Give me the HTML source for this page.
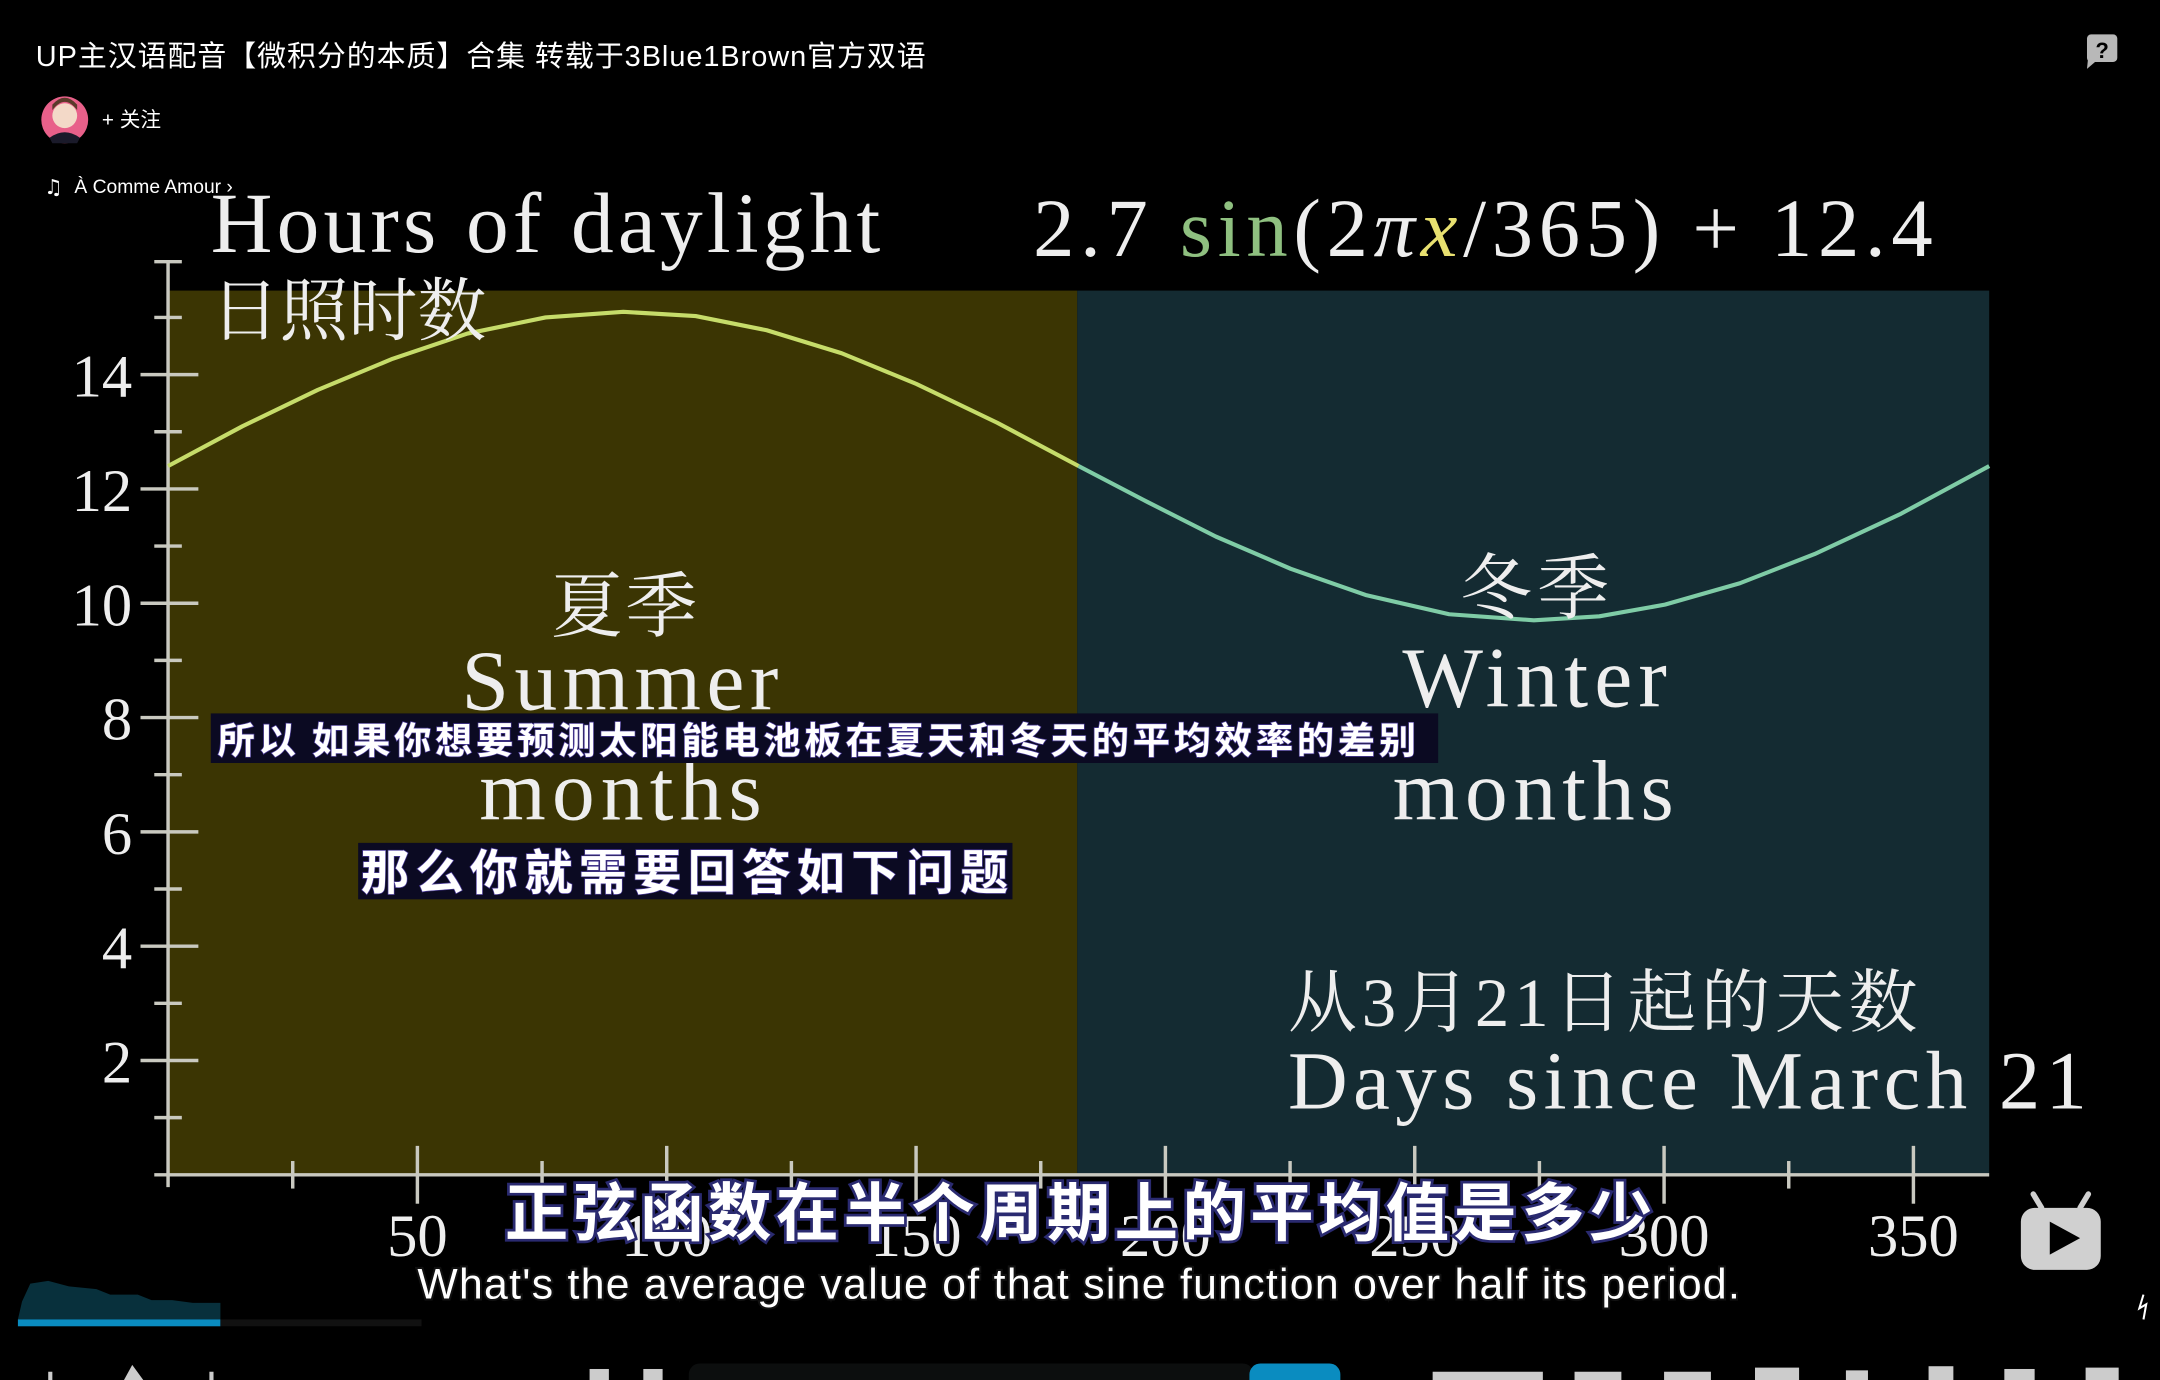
<!DOCTYPE html>
<html><head><meta charset="utf-8"><style>
html,body{margin:0;padding:0;background:#000;width:2160px;height:1380px;overflow:hidden}
svg{display:block}
</style></head><body>
<svg width="2160" height="1380" viewBox="0 0 1568 1002" preserveAspectRatio="none" xmlns="http://www.w3.org/2000/svg">
<rect width="1568" height="1002" fill="#000"/>
<!-- header -->
<text x="26" y="48" font-family="Liberation Sans, Noto Sans CJK SC, sans-serif" font-size="21" fill="#fff" textLength="646">UP主汉语配音【微积分的本质】合集 转载于3Blue1Brown官方双语</text>
<circle cx="47" cy="87" r="17" fill="#e8608a"/>
<circle cx="47" cy="84" r="9" fill="#f3d9c8"/>
<path d="M38 80 Q47 68 56 80 L56 76 Q47 66 38 76Z" fill="#5a3a2a"/>
<path d="M36 100 Q47 92 58 100 L56 104 L38 104Z" fill="#1a1a2a"/>
<text x="74" y="92" font-family="Liberation Sans, Noto Sans CJK SC, sans-serif" font-size="15" fill="#fff">+ 关注</text>
<text x="32" y="141" font-family="DejaVu Sans, sans-serif" font-size="15" fill="#fff">♫</text>
<text x="54" y="140" font-family="Liberation Sans, sans-serif" font-size="14" fill="#fff">À Comme Amour ›</text>
<rect x="1515" y="25" width="22" height="20" rx="3" fill="#b8b8b8"/>
<path d="M1516 40 L1515 50 L1522 44Z" fill="#b8b8b8"/>
<text x="1526" y="42" text-anchor="middle" font-family="Liberation Sans, sans-serif" font-weight="bold" font-size="16" fill="#000">?</text>

<!-- regions -->
<rect x="122" y="211" width="660" height="642" fill="#3b3503"/>
<rect x="782" y="211" width="662" height="642" fill="#142b32"/>

<!-- axes -->
<g stroke="#c9c9c0" stroke-width="2.5">
<line x1="122" y1="190" x2="122" y2="862"/>
<line x1="112" y1="853" x2="1444" y2="853"/>
<line x1="112" y1="190" x2="132" y2="190"/>
</g>
<g stroke="#c9c9c0" stroke-width="2.5">
<line x1="112" y1="811.5" x2="132" y2="811.5"/><line x1="102" y1="770" x2="144" y2="770"/>
<line x1="112" y1="728.5" x2="132" y2="728.5"/><line x1="102" y1="687" x2="144" y2="687"/>
<line x1="112" y1="645.5" x2="132" y2="645.5"/><line x1="102" y1="604" x2="144" y2="604"/>
<line x1="112" y1="562.5" x2="132" y2="562.5"/><line x1="102" y1="521" x2="144" y2="521"/>
<line x1="112" y1="479.5" x2="132" y2="479.5"/><line x1="102" y1="438" x2="144" y2="438"/>
<line x1="112" y1="396.5" x2="132" y2="396.5"/><line x1="102" y1="355" x2="144" y2="355"/>
<line x1="112" y1="313.5" x2="132" y2="313.5"/><line x1="102" y1="272" x2="144" y2="272"/>
<line x1="112" y1="230.5" x2="132" y2="230.5"/>
<line x1="212.5" y1="843" x2="212.5" y2="863"/><line x1="303" y1="832" x2="303" y2="874"/>
<line x1="393.5" y1="843" x2="393.5" y2="863"/><line x1="484" y1="832" x2="484" y2="874"/>
<line x1="574.5" y1="843" x2="574.5" y2="863"/><line x1="665" y1="832" x2="665" y2="874"/>
<line x1="755.5" y1="843" x2="755.5" y2="863"/><line x1="846" y1="832" x2="846" y2="874"/>
<line x1="936.5" y1="843" x2="936.5" y2="863"/><line x1="1027" y1="832" x2="1027" y2="874"/>
<line x1="1117.5" y1="843" x2="1117.5" y2="863"/><line x1="1208" y1="832" x2="1208" y2="874"/>
<line x1="1298.5" y1="843" x2="1298.5" y2="863"/><line x1="1389" y1="832" x2="1389" y2="874"/>
</g>
<g font-family="Liberation Serif, serif" font-size="44" fill="#eee" text-anchor="end">
<text x="96" y="288">14</text><text x="96" y="371">12</text><text x="96" y="454">10</text>
<text x="96" y="537">8</text><text x="96" y="620">6</text><text x="96" y="703">4</text><text x="96" y="786">2</text>
</g>
<g font-family="Liberation Serif, serif" font-size="44" fill="#eee" text-anchor="middle">
<text x="303" y="912">50</text><text x="484" y="912">100</text><text x="665" y="912">150</text>
<text x="846" y="912">200</text><text x="1027" y="912">250</text><text x="1208" y="912">300</text><text x="1389" y="912">350</text>
</g>

<!-- curve -->
<polyline fill="none" stroke="#c6dc6a" stroke-width="3" stroke-linejoin="round" points="122,338.4 176,309.5 230.7,283.1 285,260.5 339.3,242.2 396,230.5 452.5,226.4 505,229.5 556.6,239.8 611,256.5 665.3,278.8 724,307 783,338.4"/>
<polyline fill="none" stroke="#7fcca6" stroke-width="3" stroke-linejoin="round" points="783,338.4 833,364.5 882.6,389.6 937,413 991.3,432 1052,446 1113.5,450.4 1161,447.5 1208.6,439 1263,423.5 1317.2,402.3 1380,373 1444,338.4"/>

<!-- titles -->
<text x="153" y="183" font-family="Liberation Serif, serif" font-size="62" fill="#eee" textLength="486">Hours of daylight</text>
<text x="153" y="243" font-family="Liberation Serif, Noto Serif CJK SC, serif" font-size="50" fill="#eee">日照时数</text>
<text x="750" y="186" font-family="Liberation Serif, serif" font-size="60" fill="#eee" textLength="653">2.7 <tspan fill="#8fc080">sin</tspan>(2<tspan font-style="italic">π</tspan><tspan font-style="italic" fill="#e8e070">x</tspan>/365) + 12.4</text>

<g font-family="Liberation Serif, Noto Serif CJK SC, serif" fill="#eee">
<text x="400" y="458" font-size="52" textLength="106">夏季</text>
<text x="335" y="515" font-size="62" textLength="230">Summer</text>
<text x="348" y="595" font-size="62" textLength="205">months</text>
<text x="1060" y="445" font-size="52" textLength="108">冬季</text>
<text x="1018" y="513" font-size="62" textLength="192">Winter</text>
<text x="1011" y="595" font-size="62" textLength="204">months</text>
</g>
<text x="935" y="745" font-family="Liberation Serif, Noto Serif CJK SC, serif" font-size="50" fill="#eee" textLength="457">从3月21日起的天数</text>
<text x="935" y="805" font-family="Liberation Serif, serif" font-size="60" fill="#eee" textLength="580">Days since March 21</text>

<!-- subtitle boxes -->
<rect x="153" y="518" width="891" height="36" fill="#0b0a22"/>
<text x="158" y="547" font-family="Noto Sans CJK SC, sans-serif" font-weight="bold" font-size="27" fill="#fff" stroke="#4a3a9a" stroke-width="1" paint-order="stroke" textLength="870">所以  如果你想要预测太阳能电池板在夏天和冬天的平均效率的差别</text>
<rect x="260" y="612" width="475" height="41" fill="#0b0a22"/>
<text x="262" y="646" font-family="Noto Sans CJK SC, sans-serif" font-weight="bold" font-size="35" fill="#fff" stroke="#4a3a9a" stroke-width="1" paint-order="stroke" textLength="470">那么你就需要回答如下问题</text>

<!-- bottom subtitles -->
<text x="783" y="897" text-anchor="middle" font-family="Noto Sans CJK SC, sans-serif" font-weight="bold" font-size="46" fill="#fff" stroke="#2a2a70" stroke-width="4" paint-order="stroke" textLength="833">正弦函数在半个周期上的平均值是多少</text>
<text x="303" y="943" font-family="Liberation Sans Narrow, Liberation Sans, sans-serif" font-size="31" fill="#fff" stroke="#111" stroke-width="3" paint-order="stroke" textLength="960">What's the average value of that sine function over half its period.</text>

<!-- bili icon -->
<rect x="1467" y="877" width="58" height="45" rx="10" fill="#d0d0d0"/>
<line x1="1482" y1="877" x2="1476" y2="867" stroke="#d0d0d0" stroke-width="4" stroke-linecap="round"/>
<line x1="1510" y1="877" x2="1516" y2="867" stroke="#d0d0d0" stroke-width="4" stroke-linecap="round"/>
<path d="M1488 887 L1510 899 L1488 911Z" fill="#000"/>
<path d="M1556 940 L1553 950 L1558 947 L1556 958" stroke="#fff" stroke-width="1.5" fill="none"/>

<!-- progress -->
<path d="M13 958 L16 945 L22 932 L35 930 L50 934 L70 936 L80 940 L100 940 L110 944 L125 944 L140 946 L160 946 L160 958Z" fill="#08303c"/>
<rect x="13" y="958" width="147" height="5" fill="#0a8cc0"/>
<rect x="160" y="958" width="146" height="5" fill="#111"/>

<!-- controls partial -->
<rect x="500" y="990" width="410" height="20" rx="8" fill="#0c0e0e"/>
<rect x="907" y="990" width="66" height="20" rx="8" fill="#0a8cc0"/>
<g fill="#ccc">
<rect x="35" y="996" width="3" height="6"/><path d="M90 1002 L96 991 L104 1002Z"/><rect x="152" y="996" width="3" height="6"/>
<rect x="428" y="994" width="14" height="8"/><rect x="467" y="994" width="14" height="8"/>
<rect x="1040" y="996" width="80" height="6"/><rect x="1143" y="996" width="34" height="6"/><rect x="1208" y="996" width="34" height="6"/>
<rect x="1274" y="993" width="32" height="9"/><rect x="1340" y="995" width="16" height="7"/><rect x="1400" y="992" width="18" height="10"/><rect x="1455" y="994" width="22" height="8"/><rect x="1514" y="993" width="24" height="9"/>
</g>
</svg>
</body></html>
